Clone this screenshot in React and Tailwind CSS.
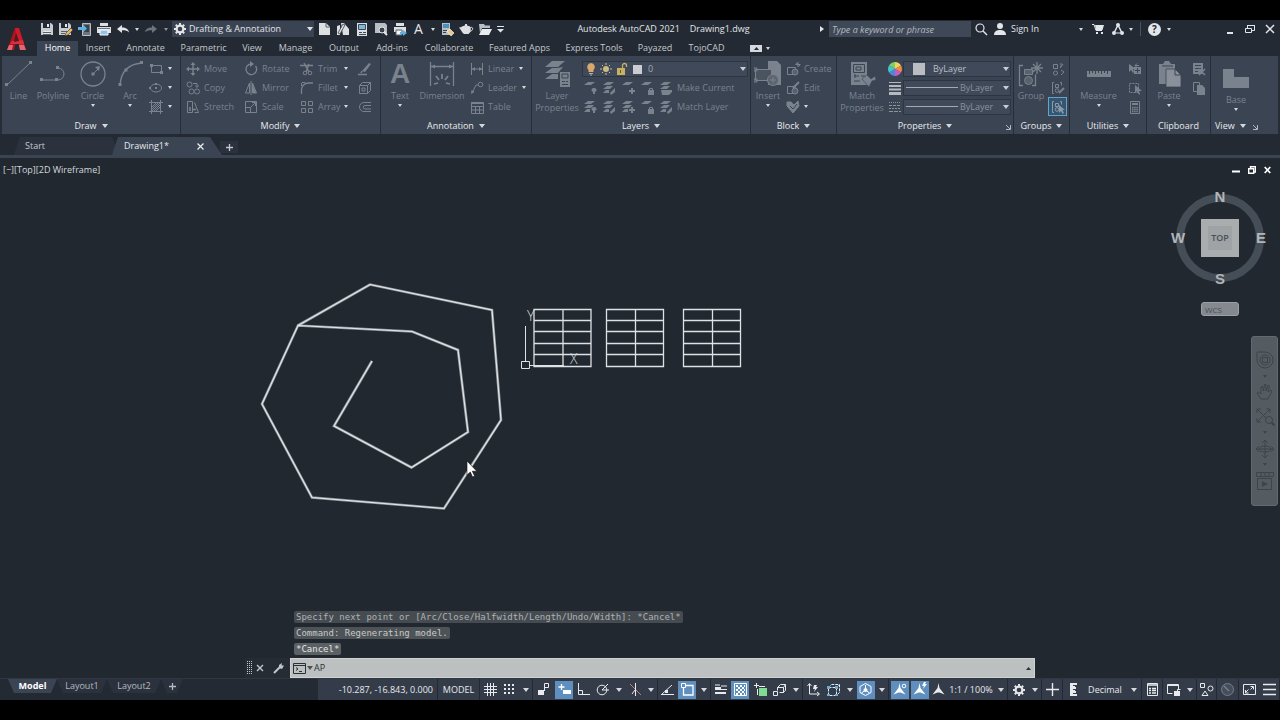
import React, { useState } from "react";

/* ---------- small helpers ---------- */

function Ico({ w = 16, h = 16, className = "", children }) {
  return (
    <svg
      width={w}
      height={h}
      viewBox={`0 0 ${w} ${h}`}
      fill="none"
      stroke="currentColor"
      strokeWidth="1"
      className={`shrink-0 ${className}`}
      aria-hidden="true"
    >
      {children}
    </svg>
  );
}

function Caret({ className = "text-[#d5d8dd]" }) {
  return (
    <Ico w={6} h={4} className={className}>
      <path d="M0 0h6L3 4z" fill="currentColor" stroke="none" />
    </Ico>
  );
}

function SmallCaret({ className = "text-[#d5d8dd]" }) {
  return (
    <Ico w={4} h={3} className={className}>
      <path d="M0 0h4L2 3z" fill="currentColor" stroke="none" />
    </Ico>
  );
}

/* ---------- quick access icons ---------- */

const Save = () => (
  <Ico>
    <path d="M2 2h10l2 2v10H2z" fill="#c8ccd0" stroke="none" />
    <path d="M4 2h7v5H4z" fill="#232a33" stroke="none" />
    <path d="M8 3h2v3H8zM4.500 10h7v4h-7z" fill="#e8eaec" stroke="none" />
    <path d="M4 11.500h8M4 13.500h8" stroke="#5a616b" />
  </Ico>
);
const SaveAs = () => (
  <Ico>
    <path d="M1 2h10l2 2v10H1z" fill="#c8ccd0" stroke="none" />
    <path d="M3 2h7v5H3z" fill="#232a33" stroke="none" />
    <path d="M7 3h2v3H7z" fill="#e8eaec" stroke="none" />
    <path d="M3 10.500h6M3 12.500h4" stroke="#5a616b" />
    <path d="M7 15l1-3 5-5 2 2-5 5z" fill="#e9b565" stroke="#232a33" strokeWidth=".6" />
  </Ico>
);
const OpenMobile = () => (
  <Ico>
    <path d="M5.500 2.500h8v12h-8z" fill="#6d747d" stroke="#b9bec4" />
    <path d="M7 4h5v7H7z" fill="#39414b" stroke="none" />
    <path d="M1 6h5V3.500L10 7.500 6 11.500V9H1z" fill="#5fb0e0" stroke="none" />
  </Ico>
);
const Printer = () => (
  <Ico>
    <path d="M4 2h8v3H4zM1 6h14v6H1z" fill="#dde0e3" stroke="none" />
    <path d="M4 9h8v5H4z" fill="#8fc4e8" stroke="#fff" />
    <path d="M2 7.500h12" stroke="#6d747d" />
  </Ico>
);
const Undo = ({ flip }) => (
  <Ico className={flip ? "-scale-x-100 text-[#6d747e]" : "text-[#e3e5e8]"}>
    <path d="M2 8l5-4v2.500c4 0 6.500 1.500 7 5-2-2-4-2.300-7-2.200V12z" fill="currentColor" stroke="none" />
  </Ico>
);
const Gear = ({ className = "text-[#e3e5e8]" }) => (
  <Ico w={14} h={14} className={className}>
    <circle cx="7" cy="7" r="3.400" strokeWidth="2.200" />
    <path
      d="M7 1v2M7 11v2M1 7h2M11 7h2M2.800 2.800l1.400 1.400M9.800 9.800l1.400 1.400M2.800 11.200l1.400-1.400M9.800 4.200l1.400-1.400"
      strokeWidth="2"
    />
  </Ico>
);
const NewPage = () => (
  <Ico>
    <path d="M3 2h7l4 4v8H3z" fill="#dde0e3" stroke="none" />
    <path d="M10 2v4h4" stroke="#5a616b" />
  </Ico>
);
const Sheets = () => (
  <Ico>
    <path d="M2 5l3-1v10H2zM6 2h3l5 6v6H8z" fill="#dde0e3" stroke="none" />
    <path d="M3 12l5-9 2 1-5 9z" fill="#dde0e3" stroke="#39414b" strokeWidth=".8" />
  </Ico>
);
const PageSetup = () => (
  <Ico>
    <path d="M3 2h10v13H3z" fill="#dde0e3" stroke="none" />
    <path d="M4.500 3.500h7v5h-7z" fill="#7db7dd" stroke="#3f4853" />
    <path d="M5 11.500h3M9 11.500h3M5 13.500h7" stroke="#3f4853" />
  </Ico>
);
const Preview = () => (
  <Ico>
    <path d="M2 2h10l2 2v8H2z" fill="#b9bec4" stroke="none" />
    <circle cx="9" cy="9" r="3" fill="#39414b" stroke="#e3e5e8" />
    <path d="M11 11l3 3" stroke="#e3e5e8" strokeWidth="2" />
  </Ico>
);
const BatchPlot = () => (
  <Ico>
    <path d="M4 2h8v3H4zM2 6h12v5H2z" fill="#dde0e3" stroke="none" />
    <path d="M4 9h6v5H4z" fill="#f4f5f6" stroke="#5a616b" />
    <path d="M8 11h3V9l4 3-4 3v-2H8z" fill="#5fb0e0" stroke="none" />
  </Ico>
);
const Brush = () => (
  <Ico>
    <path d="M3 2h8v12H3z" fill="#b9bec4" stroke="none" />
    <path d="M4 3h6v4H4z" fill="#4a8fc0" stroke="none" />
    <path d="M4 9.500h4M4 11.500h3" stroke="#39414b" />
    <path d="M8 10l3-2 4 4-3 3z" fill="#e9c98a" stroke="#fff" strokeWidth=".6" />
  </Ico>
);
const Teapot = () => (
  <Ico>
    <path d="M3.500 6c2-2 7-2 9 0 1 3-.5 6-2 7H6C3.800 11.500 3 8.500 1 6.500z" fill="#dde0e3" stroke="none" />
    <path d="M12.500 6.500c3-1 3 3-.5 4" stroke="#dde0e3" />
    <path d="M7 4h2" stroke="#dde0e3" strokeWidth="2" />
  </Ico>
);
const Folder = () => (
  <Ico>
    <path d="M2 3h5l1 1.500h5V7H5l-2 5z" fill="#b9bec4" stroke="none" />
    <path d="M5 8h10l-3 6H2z" fill="#e9ebed" stroke="none" />
  </Ico>
);

/* ---------- ribbon icons ---------- */

const LineBig = () => (
  <Ico w={28} h={28}>
    <path d="M2 25L25 3" />
    <path d="M0 23h3v3H0zM24 1h3v3h-3z" fill="currentColor" stroke="none" />
  </Ico>
);
const PolylineBig = () => (
  <Ico w={28} h={28}>
    <path d="M2 20h17a6 6 0 0 0 0-12" />
    <path d="M1 18h3v3H1zM16 18h3v3h-3zM17 6h3v3h-3z" fill="currentColor" stroke="none" />
  </Ico>
);
const CircleBig = () => (
  <Ico w={28} h={28}>
    <circle cx="14" cy="14" r="12" strokeWidth="1.300" />
    <path d="M14 14l6-6" />
    <path d="M12.500 12.500h3v3h-3zM21 6l-1 5-4-4z" fill="currentColor" stroke="none" />
  </Ico>
);
const ArcBig = () => (
  <Ico w={28} h={28}>
    <path d="M4 25C5 12 12 4 26 3" strokeWidth="1.300" />
    <path d="M2.500 23h3v3h-3zM8.500 8.500h3v3h-3zM24 1h3v3h-3z" fill="currentColor" stroke="none" />
  </Ico>
);
const RectIco = () => (
  <Ico>
    <path d="M3.500 4.500h10v7h-10z" />
    <path d="M2 3h3v3H2zM12 10h3v3h-3z" fill="currentColor" stroke="none" />
  </Ico>
);
const EllipseIco = () => (
  <Ico>
    <ellipse cx="8" cy="8" rx="5.500" ry="4" />
    <path d="M7 7h2v2H7zM1 7h2v2H1zM7 3h2v2H7z" fill="currentColor" stroke="none" />
  </Ico>
);
const HatchIco = () => (
  <Ico>
    <path d="M3.500 1v14M12.500 1v14M1 3.500h14M1 12.500h14" />
    <path d="M4 8l4-4M4 12l8-8M8 12l4-4M4 10l6-6M6 12l6-6" />
  </Ico>
);
const MoveIco = () => (
  <Ico>
    <path d="M8 3v10M3 8h10" strokeWidth="1.400" />
    <path d="M8 1l2.500 3h-5zM8 15l2.500-3h-5zM1 8l3-2.500v5zM15 8l-3-2.500v5z" fill="currentColor" stroke="none" />
  </Ico>
);
const CopyIco = () => (
  <Ico>
    <circle cx="4.500" cy="4.500" r="2.500" />
    <circle cx="6.500" cy="11.500" r="2.500" />
    <circle cx="12" cy="11.500" r="2.500" />
    <path d="M8 3.500h4v3M10.500 5.500l1.500 2 1.500-2" />
  </Ico>
);
const StretchIco = () => (
  <Ico>
    <path d="M2.500 2.500h5v11h-5zM9.500 3.500l4 10h-4" />
    <path d="M5 8v4M8 10.500h3" strokeWidth="1.500" />
  </Ico>
);
const RotateIco = () => (
  <Ico>
    <path d="M12.500 5A5.300 5.300 0 1 1 8 3" strokeWidth="1.300" />
    <path d="M7 0l4 3-4 3z" fill="currentColor" stroke="none" />
  </Ico>
);
const MirrorIco = () => (
  <Ico>
    <path d="M6.500 3v10h-4zM9.500 3v10h4z" />
    <path d="M8 1v14" />
    <path d="M10 5l3 8h-3z" fill="currentColor" stroke="none" />
  </Ico>
);
const ScaleIco = () => (
  <Ico>
    <path d="M2.500 2.500h11v11h-11zM2.500 8.500h5v5" />
    <path d="M8 8l4-4M9 3.500h3.500V7" />
  </Ico>
);
const TrimIco = () => (
  <Ico>
    <path d="M1 4.500h13M5 2l5 9M10 3l-3 8" strokeWidth="1.400" />
    <circle cx="11" cy="12" r="1.800" />
    <circle cx="6" cy="12" r="1.800" />
  </Ico>
);
const FilletIco = () => (
  <Ico>
    <path d="M2.500 14V10c0-4 3-7 7-7H14" strokeWidth="1.300" />
    <path d="M2.500 3v3M3 2.500h3" />
  </Ico>
);
const ArrayIco = () => (
  <Ico>
    <path d="M2.500 2.500h4v4h-4zM9.500 2.500h4v4h-4zM2.500 9.500h4v4h-4zM9.500 9.500h4v4h-4z" />
  </Ico>
);
const EraseIco = () => (
  <Ico>
    <path d="M5 10L12 2l2 1-6 8z" fill="currentColor" stroke="none" />
    <path d="M1 13.500h9M4 12l1-2" strokeWidth="1.500" />
  </Ico>
);
const ExplodeIco = () => (
  <Ico>
    <path d="M2.500 5.500h8v8h-8zM2.500 5.500l3-3h8v8l-3 3M10.500 5.500l3-3M5 8h3v3H5z" />
  </Ico>
);
const OffsetIco = () => (
  <Ico>
    <path d="M14 3.500H7a4.500 4.500 0 0 0 0 9h7M14 6.500H8a1.700 1.700 0 0 0 0 3.500h6" />
  </Ico>
);
const DimensionBig = () => (
  <Ico w={28} h={28}>
    <path d="M2.500 2v24M25.500 2v24M3 6.500h22" strokeWidth="1.300" />
    <path d="M3 6.500l4-2v4zM25 6.500l-4-2v4z" fill="currentColor" stroke="none" />
    <path d="M14 14v5M8 16l3 4M20 16l-3 4M6 24l4-1M22 24l-4-1" strokeWidth="1.800" />
  </Ico>
);
const LinearIco = () => (
  <Ico>
    <path d="M2.500 2v12M13.500 2v12M3 8h10" />
    <path d="M3 8l3-2v4zM13 8l-3-2v4z" fill="currentColor" stroke="none" />
  </Ico>
);
const LeaderIco = () => (
  <Ico>
    <circle cx="11.500" cy="4.500" r="2.300" />
    <path d="M9 5H7l-4 8" />
    <path d="M2 14l.5-4 3 2z" fill="currentColor" stroke="none" />
  </Ico>
);
const TableIco = () => (
  <Ico>
    <path d="M2.500 3.500h12v11h-12zM2 7.500h12M2 11h12M6.500 7v7M10.500 7v7" />
    <path d="M2 3h12v2H2z" fill="currentColor" stroke="none" />
  </Ico>
);
const LayersBig = () => (
  <Ico w={28} h={28}>
    <g fill="currentColor" stroke="none">
      <path d="M9 1h13l-7 6H2zM9 8h5l6-1-5 6H2zM9 14h6v5H2z" />
      <path d="M17 12h10v15H17z" />
    </g>
    <path d="M19 14h6v4h-6zM19 21.500h3M23 21.500h2M19 24.500h6" stroke="#3b4453" />
  </Ico>
);
const LayerMini = ({ mark, full }) => (
  <Ico>
    <g fill="currentColor" stroke="none">
      <path d="M6 2h7l-4 3H2z" />
      {full && <path d="M6 6h6l-3 3H2z" />}
      {full && mark !== "hand" && <path d="M5 10h3v3H2z" />}
      {mark === "dot" && <path d="M12 8a2 2 0 0 1 1 4v2h-2v-2a2 2 0 0 1 1-4z" />}
      {mark === "arrow" && <path d="M14 8v4l-4 3-1-2z" />}
      {mark === "star" && <path d="M11 8h2v2h2v2h-2v2h-2v-2H9v-2h2z" />}
      {mark === "lock" && <path d="M9 10h6v5H9z" />}
      {mark === "hand" && <path d="M3 10h11v2l-3 3H4z" />}
    </g>
    {mark === "lock" && <path d="M10.500 10V8.500h3V10" />}
  </Ico>
);
const InsertBig = () => (
  <Ico w={28} h={28}>
    <path d="M14 1h9l4 4v20H14z" fill="currentColor" stroke="none" />
    <path d="M1.500 9.500h16v11h-16z" fill="#4b535f" />
    <circle cx="19" cy="20" r="5.500" fill="#5c6470" />
    <path d="M19 17v6M16 20h6M0 8h3v3H0zM0 19h3v3H0z" />
  </Ico>
);
const BlockIco = ({ kind }) => (
  <Ico>
    {kind !== "attr" && <path d="M2.500 6.500h8v7h-8z" />}
    {kind !== "attr" && <circle cx="10" cy="11" r="3" fill="#59616d" />}
    {kind === "create" && <path d="M13 1v5M10.500 3.500h5M11 2l4 3" />}
    {kind === "edit" && <path d="M8 8l6-6" strokeWidth="2" />}
    {kind === "attr" && <path d="M2 3h4l3 3 4-4 1 5-6 7-6-7z" fill="currentColor" />}
    {kind === "attr" && <path d="M5 7l3 3 4-5" stroke="#3b4453" />}
  </Ico>
);
const MatchBig = () => (
  <Ico w={28} h={28}>
    <path d="M3 2h16v23H3z" fill="currentColor" stroke="none" />
    <path d="M5.500 4.500h11v8h-11zM8 7h5v3H8zM6 16h5M7 14v4M13 16h4M6 21h6" stroke="#3b4453" />
    <path d="M14 19l5-4 4 4 4-3 1 4-4 1-3 6z" fill="currentColor" stroke="#3b4453" strokeWidth=".6" />
  </Ico>
);
const ColorWheel = () => (
  <Ico>
    <g stroke="none">
      <path d="M8 8V1a7 7 0 0 1 6 3.500z" fill="#f0d55c" />
      <path d="M8 8l6-3.500a7 7 0 0 1 0 7z" fill="#ef8a4b" />
      <path d="M8 8l6 3.500A7 7 0 0 1 8 15z" fill="#c95bc0" />
      <path d="M8 8v7a7 7 0 0 1-6-3.500z" fill="#4e86dd" />
      <path d="M8 8l-6 3.500a7 7 0 0 1 0-7z" fill="#46c3cc" />
      <path d="M8 8L2 4.500A7 7 0 0 1 8 1z" fill="#79cf6d" />
    </g>
  </Ico>
);
const LineweightIco = () => (
  <Ico className="text-[#b4b9c0]">
    <path d="M2 2.500h12" />
    <path d="M2 6h12" strokeWidth="2" />
    <path d="M2 9.500h12" strokeWidth="2" />
    <path d="M2 13.500h12" strokeWidth="3" />
  </Ico>
);
const LinetypeIco = () => (
  <Ico className="text-[#8d949d]">
    <path d="M2 3.500h12" strokeDasharray="1 1" />
    <path d="M2 6.500h12" strokeDasharray="3 1" />
    <path d="M2 9.500h12" strokeDasharray="2 1" />
    <path d="M2 12.500h12" strokeDasharray="4 1" />
  </Ico>
);
const GroupBig = () => (
  <Ico w={28} h={28}>
    <path d="M6 5.500H2.500v20H6M15 25.500h3.500v-11" strokeWidth="1.300" />
    <path d="M7.500 9.500h8v5h-8z" fill="#59616d" />
    <circle cx="11.500" cy="20.500" r="4" fill="#59616d" />
    <path d="M20 2v12M14 8h12M16 4l8 8M24 4l-8 8" strokeWidth="1.300" />
  </Ico>
);
const UngroupIco = () => (
  <Ico>
    <path d="M3.500 3.500h4v4h-4zM11 2v4M13 3l-3 4M11 9l3 2-3 3" />
    <circle cx="5.500" cy="12" r="2" />
  </Ico>
);
const GroupEditIco = ({ cursor }) => (
  <Ico>
    <path d="M4 2.500H2.500v11H4M10 2.500h1.500v3M5.500 4.500h3v3h-3z" />
    <circle cx="7" cy="10.500" r="1.800" />
    {cursor ? (
      <path d="M9 6v8l2-2 1.500 3 1.500-1-1.500-3H15z" fill="currentColor" stroke="none" />
    ) : (
      <path d="M9 13l5-5" strokeWidth="2" />
    )}
  </Ico>
);
const MeasureBig = () => (
  <Ico w={28} h={28}>
    <path d="M2 11h24v6H2z" fill="currentColor" stroke="none" />
    <path d="M4.500 11v3M7.500 11v2M10.500 11v3M13.500 11v2M16.500 11v3M19.500 11v2M22.500 11v3" stroke="#3b4453" />
  </Ico>
);
const SelectIco = ({ dashed }) => (
  <Ico>
    {dashed ? (
      <path d="M2.500 3.500h9v9h-9z" strokeDasharray="2 1" />
    ) : (
      <path d="M7 6h7v7H7z" fill="currentColor" stroke="none" />
    )}
    <path
      d={dashed ? "M8 5v8l2-2 2 4 1-1-1-3h3z" : "M2 3v8l2-2 2 3 1-1-1-3h3z"}
      fill="currentColor"
      stroke="none"
    />
    {!dashed && <path d="M8 9.500h5M10.500 7v5" stroke="#3b4453" />}
    {!dashed && <path d="M8 4.500h4M10 2.500l-2 2 2 2" />}
  </Ico>
);
const CalcIco = () => (
  <Ico>
    <path d="M3.500 2.500h9v12h-9z" />
    <path d="M5 5h6" strokeWidth="2" />
    <path d="M5 8.500h6M5 10.500h6M5 12.500h6" strokeWidth="1.300" strokeDasharray="1.500 .7" />
  </Ico>
);
const PasteBig = () => (
  <Ico w={28} h={28}>
    <path d="M4 4h4l2-3h4l2 3h4v20H4z" fill="currentColor" stroke="none" />
    <path d="M7 6h11" stroke="#3b4453" />
    <path d="M11 9h9l6 6v12H11z" fill="#8a9099" stroke="#3b4453" strokeWidth=".8" />
    <path d="M20 9v6h6" stroke="#3b4453" />
  </Ico>
);
const CutIco = () => (
  <Ico>
    <path d="M2 2h10v11H2z" fill="currentColor" stroke="none" />
    <path d="M4 4.500h6M4 7.500h6M4 10.500h3" stroke="#3b4453" />
    <path d="M8 8l6 6M14 8l-6 6" strokeWidth="1.500" />
  </Ico>
);
const CopyClipIco = () => (
  <Ico>
    <path d="M2.500 2.500h6v9h-6z" />
    <path d="M6 5h5l3 3v7H6z" fill="currentColor" stroke="none" />
  </Ico>
);
const BaseBig = () => (
  <Ico w={28} h={28}>
    <path d="M1 5h11v8h15v11H1z" fill="currentColor" stroke="none" />
  </Ico>
);

/* ---------- ribbon building blocks ---------- */

function Panel({ title, width, menu = true, launcher, align = "justify-center", children }) {
  return (
    <section
      className={`${width} h-[78px] shrink-0 flex flex-col bg-[#3b4453] border-r border-[#262d37] text-[#7a828d]`}
    >
      <div className="flex-1 flex pt-[3px]">{children}</div>
      <div className={`h-[18px] pt-[2px] flex items-center relative ${align}`}>
        <button className="flex items-center gap-[5px] text-[9px] leading-4 font-medium text-[#e8eaed]">
          {title}
          {menu && <Caret />}
        </button>
        {launcher && (
          <button aria-label={`${title} settings`} className={launcher}>
            <Ico w={6} h={6} className="text-[#b4b9c0]">
              <path d="M1 1l4 4M5.500 1v4.500H1" />
            </Ico>
          </button>
        )}
      </div>
    </section>
  );
}

function BigButton({ icon, label, width, menu, drop = "" }) {
  return (
    <button className={`${width} shrink-0 flex flex-col items-center ${drop}`}>
      <span className="h-[31px] pb-px flex items-center">{icon}</span>
      <span className="text-[9px] leading-3 text-center">{label}</span>
      {menu && (
        <span className="pt-[2px]">
          <SmallCaret />
        </span>
      )}
    </button>
  );
}

function SmallButton({ icon, label, menu, name, className = "" }) {
  return (
    <button aria-label={label || name} className={`h-[19px] flex items-center gap-[3px] ${className}`}>
      {icon}
      {label && <span className="text-[9px] leading-4 whitespace-nowrap">{label}</span>}
      {menu && <SmallCaret />}
    </button>
  );
}

function RibbonSelect({ label, options, className = "", children }) {
  return (
    <div className="h-4 flex-1 min-w-0 flex items-center bg-[#3f4959] border border-[#2d3541]">
      {children}
      <select
        aria-label={label}
        className={`flex-1 min-w-0 h-full appearance-none bg-transparent text-[9px] leading-[14px] outline-none ${className}`}
      >
        {options.map((o) => (
          <option key={o}>{o}</option>
        ))}
      </select>
      <Caret className="mr-[1px] text-[#c9cdd3]" />
    </div>
  );
}

/* ---------- header ---------- */

const menuTabs = [
  { name: "Insert", width: "w-[40px]" },
  { name: "Annotate", width: "w-[55px]" },
  { name: "Parametric", width: "w-[61px]" },
  { name: "View", width: "w-[36px]" },
  { name: "Manage", width: "w-[51px]" },
  { name: "Output", width: "w-[46px]" },
  { name: "Add-ins", width: "w-[50px]" },
  { name: "Collaborate", width: "w-[64px]" },
  { name: "Featured Apps", width: "w-[77px]" },
  { name: "Express Tools", width: "w-[72px]" },
  { name: "Payazed", width: "w-[50px]" },
  { name: "TojoCAD", width: "w-[53px]" },
];

function QuickButton({ name, width = "w-[19px]", children }) {
  return (
    <button aria-label={name} className={`${width} h-full shrink-0 flex items-center justify-center`}>
      {children}
    </button>
  );
}

function TitleBar() {
  return (
    <div className="h-[18px] flex items-center text-[9px] text-[#e2e5e9]">
      <QuickButton name="Save"><Save /></QuickButton>
      <QuickButton name="Save As"><SaveAs /></QuickButton>
      <QuickButton name="Open from Web & Mobile"><OpenMobile /></QuickButton>
      <QuickButton name="Plot"><Printer /></QuickButton>
      <QuickButton name="Undo"><Undo /></QuickButton>
      <QuickButton name="Undo list" width="w-[9px]"><SmallCaret /></QuickButton>
      <QuickButton name="Redo"><Undo flip /></QuickButton>
      <QuickButton name="Redo list" width="w-[12px]"><SmallCaret className="text-[#8b929b]" /></QuickButton>
      <div className="w-[142px] h-4 shrink-0 flex items-center bg-[#3a4352] pl-[1px]">
        <Gear />
        <select
          aria-label="Workspace"
          className="flex-1 min-w-0 h-4 appearance-none bg-transparent outline-none pl-[2px] text-[9px] leading-4"
        >
          <option>Drafting &amp; Annotation</option>
        </select>
        <Caret className="mr-[1px] text-[#dfe2e6]" />
      </div>
      <QuickButton name="New"><NewPage /></QuickButton>
      <QuickButton name="Sheet Set"><Sheets /></QuickButton>
      <QuickButton name="Page Setup"><PageSetup /></QuickButton>
      <QuickButton name="Preview"><Preview /></QuickButton>
      <QuickButton name="Batch Plot"><BatchPlot /></QuickButton>
      <button className="w-[19px] text-center text-[14px] leading-4">A</button>
      <QuickButton name="Text list" width="w-[9px]"><SmallCaret /></QuickButton>
      <QuickButton name="Match"><Brush /></QuickButton>
      <QuickButton name="Render"><Teapot /></QuickButton>
      <QuickButton name="Open"><Folder /></QuickButton>
      <QuickButton name="Customize" width="w-[13px]">
        <Ico w={7} h={7}>
          <path d="M0 .5h7" />
          <path d="M0 3h7L3.500 6.500z" fill="currentColor" stroke="none" />
        </Ico>
      </QuickButton>
      <h1 className="flex-1 flex justify-center gap-[10px] whitespace-nowrap">
        <span>Autodesk AutoCAD 2021</span>
        <span>Drawing1.dwg</span>
      </h1>
      <button aria-label="Collapse search" className="w-[9px]">
        <Ico w={4} h={6}>
          <path d="M0 0l4 3-4 3z" fill="currentColor" stroke="none" />
        </Ico>
      </button>
      <input
        type="search"
        aria-label="Search"
        placeholder="Type a keyword or phrase"
        className="w-[142px] h-4 bg-[#3f4857] px-[3px] text-[9px] italic outline-none placeholder:text-[#b4b9c0]"
      />
      <QuickButton name="Find" width="w-[20px]">
        <Ico w={14} h={14}>
          <circle cx="6" cy="6" r="4" strokeWidth="1.200" />
          <path d="M9 9l4 4" strokeWidth="1.500" />
        </Ico>
      </QuickButton>
      <button className="w-[85px] flex items-center gap-1">
        <Ico w={14} h={14} className="ml-[2px]">
          <circle cx="7" cy="4" r="3" fill="currentColor" stroke="none" />
          <path d="M1 13c0-4 3-5 6-5s6 1 6 5z" fill="currentColor" stroke="none" />
        </Ico>
        Sign In
      </button>
      <QuickButton name="Account list" width="w-[10px]"><SmallCaret /></QuickButton>
      <QuickButton name="App Store" width="w-[24px]">
        <Ico w={12} h={12}>
          <path d="M0 1.500h2l2 6h6" />
          <path d="M3 2h9l-1.500 5H4zM4 9h2v2H4zM9 9h2v2H9z" fill="currentColor" stroke="none" />
        </Ico>
      </QuickButton>
      <QuickButton name="Autodesk" width="w-[15px]">
        <Ico w={14} h={14}>
          <path d="M7 3L3 11M7 3l4 8" strokeWidth="1.500" />
          <path d="M5 11h4" />
          <circle cx="7" cy="3" r="2" fill="currentColor" stroke="none" />
          <circle cx="3" cy="11" r="2" fill="currentColor" stroke="none" />
          <circle cx="11" cy="11" r="2" fill="currentColor" stroke="none" />
        </Ico>
      </QuickButton>
      <QuickButton name="Autodesk list" width="w-[11px]"><SmallCaret /></QuickButton>
      <span className="w-px h-[14px] ml-1 bg-[#4b535f]" />
      <button
        aria-label="Help"
        className="ml-[7px] w-[13px] h-[13px] rounded-full bg-[#e2e5e9] text-[10px] leading-[13px] font-bold text-[#232a33]"
      >
        ?
      </button>
      <QuickButton name="Help list" width="w-[16px]"><SmallCaret /></QuickButton>
      <div className="ml-[43px] flex items-center">
        <QuickButton name="Minimize" width="w-[20px]">
          <Ico w={6} h={12}><path d="M0 10h6" strokeWidth="2" /></Ico>
        </QuickButton>
        <QuickButton name="Restore" width="w-[20px]">
          <Ico w={10} h={10}>
            <path d="M.5 4.500h6v4h-6zM2.500 4V1.500h7v5H7M2 1.500h8" />
          </Ico>
        </QuickButton>
        <QuickButton name="Close" width="w-[20px]">
          <Ico w={10} h={10}><path d="M1 1l8 8M9 1L1 9" strokeWidth="1.500" /></Ico>
        </QuickButton>
      </div>
    </div>
  );
}

function Header() {
  return (
    <header className="h-9 flex bg-[#232a33]">
      <button aria-label="Application menu" className="w-[37px] shrink-0 flex items-center pl-[7px]">
        <Ico w={20} h={26}>
          <g stroke="none">
            <path d="M0 25L8 3h4l-5 22z" fill="#b3121d" />
            <path d="M8 3h4l7 22h-6z" fill="#cf1b29" />
            <path d="M5 16l11-1 1 4H3z" fill="#d8303c" />
            <path d="M9 8l3 8-5 1z" fill="#4a1c24" />
            <path d="M0 25l2-5h4l-1 5zM13 25l-1-5h5l2 5z" fill="#dd6a72" />
          </g>
        </Ico>
      </button>
      <div className="flex-1 min-w-0 flex flex-col">
        <TitleBar />
        <nav className="flex-1 flex items-end text-[9px] leading-[14px] text-[#c3c8ce]">
          <button className="w-[41px] h-[15px] pb-px bg-[#3b4453] text-white font-medium">Home</button>
          {menuTabs.map((t) => (
            <button key={t.name} className={`${t.width} h-[15px] pb-px shrink-0 whitespace-nowrap`}>
              {t.name}
            </button>
          ))}
          <button aria-label="Minimize ribbon" className="h-[15px] flex items-center gap-1 pl-[17px]">
            <Ico w={12} h={7}>
              <path d="M0 0h12v7H0z" fill="#d5d8dc" stroke="none" />
              <path d="M4 5h5L6.500 2z" fill="#232a33" stroke="none" />
            </Ico>
            <SmallCaret />
          </button>
        </nav>
      </div>
    </header>
  );
}

function Ribbon() {
  return (
    <div className="flex pl-[2px] pr-[1px] bg-[#262d37]">
      <Panel title="Draw" width="w-[179px]">
        <BigButton icon={<LineBig />} label="Line" width="w-[33px]" />
        <BigButton icon={<PolylineBig />} label="Polyline" width="w-[36px]" />
        <BigButton icon={<CircleBig />} label="Circle" width="w-[43px]" menu />
        <BigButton icon={<ArcBig />} label="Arc" width="w-[32px]" menu />
        <div>
          <SmallButton icon={<RectIco />} name="Rectangle" menu className="gap-[4px] pl-[2px]" />
          <SmallButton icon={<EllipseIco />} name="Ellipse" menu className="gap-[4px] pl-[2px]" />
          <SmallButton icon={<HatchIco />} name="Hatch" menu className="gap-[4px] pl-[2px]" />
        </div>
      </Panel>

      <Panel title="Modify" width="w-[200px]">
        <div className="w-[62px] pl-1">
          <SmallButton icon={<MoveIco />} label="Move" />
          <SmallButton icon={<CopyIco />} label="Copy" />
          <SmallButton icon={<StretchIco />} label="Stretch" />
        </div>
        <div className="w-[56px]">
          <SmallButton icon={<RotateIco />} label="Rotate" className="gap-[2px]" />
          <SmallButton icon={<MirrorIco />} label="Mirror" className="gap-[2px]" />
          <SmallButton icon={<ScaleIco />} label="Scale" className="gap-[2px]" />
        </div>
        <div className="w-[49px] flex flex-col [&>button]:w-full [&>button>svg:last-child]:ml-auto">
          <SmallButton icon={<TrimIco />} label="Trim" menu className="gap-[1px]" />
          <SmallButton icon={<FilletIco />} label="Fillet" menu className="gap-[1px]" />
          <SmallButton icon={<ArrayIco />} label="Array" menu className="gap-[1px]" />
        </div>
        <div className="pl-[9px]">
          <SmallButton icon={<EraseIco />} name="Erase" />
          <SmallButton icon={<ExplodeIco />} name="Explode" />
          <SmallButton icon={<OffsetIco />} name="Offset" />
        </div>
      </Panel>

      <Panel title="Annotation" width="w-[151px]">
        <BigButton
          icon={<span className="font-['Liberation_Sans',sans-serif] text-[28px] leading-[30px] font-bold">A</span>}
          label="Text"
          width="w-[38px]"
          menu
        />
        <BigButton icon={<DimensionBig />} label="Dimension" width="w-[46px]" />
        <div className="pl-1">
          <SmallButton icon={<LinearIco />} label="Linear" menu className="[&>span]:mr-[2px]" />
          <SmallButton icon={<LeaderIco />} label="Leader" menu className="[&>span]:mr-[2px]" />
          <SmallButton icon={<TableIco />} label="Table" />
        </div>
      </Panel>

      <Panel title="Layers" width="w-[219px]">
        <BigButton icon={<LayersBig />} label="Layer Properties" width="w-[50px]" />
        <div className="flex-1 min-w-0 pr-[2px]">
          <div className="h-[19px] flex items-center">
            <RibbonSelect label="Layer" options={["0"]} className="pl-[2px] text-[#a3a9b1]">
              <Ico w={62} h={14} className="ml-[1px]">
                <path d="M7 1a4 4 0 0 1 2.500 7v2h-5V8A4 4 0 0 1 7 1z" fill="#d9a86c" stroke="none" />
                <path d="M5 11.500h4M6 13h2" stroke="#a9aeb5" />
                <circle cx="22" cy="7" r="3" fill="#c9bd83" stroke="none" />
                <path
                  d="M22 1v2M22 11v2M16 7h2M26 7h2M18 3l1 1M25 10l1 1M26 3l-1 1M19 10l-1 1"
                  stroke="#c9bd83"
                />
                <path d="M33 6h8v7h-8z" fill="#c9b061" stroke="none" />
                <path d="M38.500 6V3.500a2 2 0 0 1 4 0V5" stroke="#c9b061" strokeWidth="1.300" />
                <path d="M36.500 8v3" stroke="#5c5a3a" />
                <path d="M49 3h9v9h-9z" fill="#c9ccd0" stroke="none" />
              </Ico>
            </RibbonSelect>
          </div>
          <div className="h-[19px] flex items-center gap-[3px]">
            <button aria-label="Layer off"><LayerMini mark="dot" /></button>
            <button aria-label="Isolate"><LayerMini mark="arrow" full /></button>
            <button aria-label="Freeze"><LayerMini mark="star" /></button>
            <button aria-label="Lock"><LayerMini mark="lock" /></button>
            <SmallButton icon={<LayerMini mark="hand" full />} label="Make Current" />
          </div>
          <div className="h-[19px] flex items-center gap-[3px]">
            <button aria-label="Turn all on"><LayerMini mark="dot" full /></button>
            <button aria-label="Unisolate"><LayerMini mark="arrow" full /></button>
            <button aria-label="Thaw all"><LayerMini mark="star" full /></button>
            <button aria-label="Unlock"><LayerMini mark="lock" /></button>
            <SmallButton icon={<LayerMini mark="arrow" full />} label="Match Layer" />
          </div>
        </div>
      </Panel>

      <Panel title="Block" width="w-[86px]">
        <BigButton icon={<InsertBig />} label="Insert" width="w-[34px]" menu />
        <div>
          <SmallButton icon={<BlockIco kind="create" />} label="Create" className="gap-[2px]" />
          <SmallButton icon={<BlockIco kind="edit" />} label="Edit" className="gap-[2px]" />
          <SmallButton icon={<BlockIco kind="attr" />} name="Edit Attributes" menu />
        </div>
      </Panel>

      <Panel title="Properties" width="w-[177px]" launcher="absolute top-[8px] right-[2px]">
        <BigButton icon={<MatchBig />} label="Match Properties" width="w-[50px]" />
        <div className="flex-1 min-w-0 pr-[2px]">
          <div className="h-[19px] flex items-center">
            <ColorWheel />
            <RibbonSelect label="Object color" options={["ByLayer"]} className="pl-2 text-[#b9bec5]">
              <span className="ml-[9px] w-3 h-3 bg-[#b9bcc2]" />
            </RibbonSelect>
          </div>
          <div className="h-[19px] flex items-center">
            <LineweightIco />
            <RibbonSelect label="Lineweight" options={["ByLayer"]} className="pl-[2px] text-[#8a919b]">
              <span className="ml-[2px] w-[52px] h-px bg-[#a4aab2]" />
            </RibbonSelect>
          </div>
          <div className="h-[19px] flex items-center">
            <LinetypeIco />
            <RibbonSelect label="Linetype" options={["ByLayer"]} className="pl-[2px] text-[#8a919b]">
              <span className="ml-[2px] w-[52px] h-px bg-[#a4aab2]" />
            </RibbonSelect>
          </div>
        </div>
      </Panel>

      <Panel title="Groups" width="w-[56px]">
        <BigButton icon={<GroupBig />} label="Group" width="w-[34px]" />
        <div className="flex flex-col items-center">
          <SmallButton icon={<UngroupIco />} name="Ungroup" />
          <SmallButton icon={<GroupEditIco />} name="Group Edit" />
          <SmallButton
            icon={<GroupEditIco cursor />}
            name="Group Selection"
            className="w-[19px] justify-center border border-[#5fa3d0] bg-[#36566f] text-[#8b99a8]"
          />
        </div>
      </Panel>

      <Panel title="Utilities" width="w-[77px]">
        <BigButton icon={<MeasureBig />} label="Measure" width="w-[57px]" menu />
        <div>
          <SmallButton icon={<SelectIco />} name="Quick Select" />
          <SmallButton icon={<SelectIco dashed />} name="Select All" />
          <SmallButton icon={<CalcIco />} name="Calculator" />
        </div>
      </Panel>

      <Panel title="Clipboard" width="w-[64px]" menu={false}>
        <BigButton icon={<PasteBig />} label="Paste" width="w-[44px]" menu />
        <div>
          <SmallButton icon={<CutIco />} name="Cut" />
          <SmallButton icon={<CopyClipIco />} name="Copy Clip" />
        </div>
      </Panel>

      <Panel title="View" width="flex-1" align="pl-1 gap-[6px]" launcher="pt-[2px]">
        <BigButton icon={<BaseBig />} label="Base" width="w-[50px]" menu drop="pt-1" />
      </Panel>
    </div>
  );
}

function FileTabs() {
  return (
    <div className="pt-[3px] bg-[#232a33]">
      <div className="h-[18px] flex text-[9px] leading-[18px]">
        <button className="ml-[14px] w-[106px] pl-[11px] text-left bg-[#2b323d] text-[#c3c8ce] [clip-path:polygon(0_100%,6px_0,98px_0,100%_100%)]">
          Start
        </button>
        <div className="-ml-[8px] w-[110px] flex items-center bg-[#3b4453] text-[#e8eaed] [clip-path:polygon(0_100%,6px_0,98px_0,100%_100%)]">
          <button className="pl-3 flex-1 text-left">Drawing1*</button>
          <button aria-label="Close Drawing1" className="mr-[18px]">
            <Ico w={7} h={7}><path d="M.5.5l6 6M6.500.5l-6 6" strokeWidth="1.300" /></Ico>
          </button>
        </div>
        <button
          aria-label="New tab"
          className="-ml-[2px] mt-[4px] w-[18px] h-[12px] flex items-center justify-center bg-[#2b323d] text-[#c3c8ce]"
        >
          <Ico w={7} h={7}><path d="M3.500 0v7M0 3.500h7" strokeWidth="1.300" /></Ico>
        </button>
      </div>
      <div className="h-[3px] bg-[#3b4453]" />
    </div>
  );
}

/* ---------- drawing area ---------- */

function GridBlock({ x }) {
  return (
    <g>
      <path d={`M${x} 151.500h57v57h-57zM${x + 29} 151v57`} />
      <path d={`M${x} 162.500h57M${x} 173.500h57M${x} 185.500h57M${x} 196.500h57`} />
    </g>
  );
}

const shape =
  "M298 167.500L370 126.500L492 152L501 262L444 350.500L312 339.500L262 246L298 167.500L412 173.500L458 192L468 274L411.500 309.500L334 268L372 203";

function Drawing() {
  return (
    <svg width="1280" height="520" fill="none" className="absolute top-0 left-0" aria-label="Model space">
      <path d={shape} stroke="#90969c" strokeWidth="2.600" />
      <path d={shape} stroke="#e6e8ea" strokeWidth="1.100" />
      <g stroke="#dfe2e5" strokeWidth="1.300">
        <GridBlock x={534} />
        <GridBlock x={606.5} />
        <GridBlock x={683.5} />
      </g>
      <g stroke="#dfe2e5">
        <path d="M525.500 168v35M529 207.500h35M521.500 203.500h8v7h-8z" />
      </g>
      <g fill="#d5d9dc" fontFamily="'Open Sans', sans-serif" fontWeight="300" fontSize="14">
        <text x="527" y="163">Y</text>
        <text x="570" y="206">X</text>
      </g>
      <path d="M467 303v14l3.300-3 2.300 5 2-1-2.300-4.800h4.500z" fill="#fff" stroke="#111" strokeWidth=".6" />
    </svg>
  );
}

function ViewCube() {
  return (
    <div className="absolute top-[30px] right-[10px] w-[100px] flex flex-col items-center">
      <svg width="100" height="100" viewBox="0 0 100 100" aria-label="View cube">
        <circle cx="50" cy="50" r="40" fill="none" stroke="#454d56" strokeWidth="8" />
        <g fill="#b0b5b9" fontFamily="'Liberation Sans', sans-serif" fontWeight="700" fontSize="15" textAnchor="middle">
          <text x="50" y="14">N</text>
          <text x="50" y="96">S</text>
          <text x="8" y="55">W</text>
          <text x="91" y="55">E</text>
        </g>
        <path d="M31 31h38v38H31z" fill="#a9adae" />
        <path d="M38 38h24v24H38z" fill="#9fa3a5" />
        <text
          x="50"
          y="53"
          fill="#4a5056"
          fontFamily="'Open Sans', sans-serif"
          fontWeight="600"
          fontSize="9"
          textAnchor="middle"
        >
          TOP
        </text>
      </svg>
      <button className="mt-[14px] w-[38px] h-[14px] rounded-[3px] border border-[#9ba0a4] bg-[#83898e] pl-[3px] text-left text-[8px] leading-[11px] text-[#4a5056]">
        WCS
      </button>
    </div>
  );
}

function NavBar() {
  return (
    <div className="absolute top-[178px] right-[2px] w-[27px] h-[170px] rounded-[3px] bg-[#545b61] border border-[#62696f] text-[#3d444b] flex flex-col items-center justify-between pt-[13px] pb-[14px]">
      <button aria-label="Full navigation wheel">
        <Ico w={20} h={20}>
          <path d="M2 2h8a8 8 0 1 1-8 8z" />
          <circle cx="10" cy="10" r="5" />
          <path d="M7.500 7.500h5v5h-5z" />
        </Ico>
      </button>
      <SmallCaret className="text-[#3d444b]" />
      <button aria-label="Pan">
        <Ico w={20} h={20}>
          <path d="M6 17l-4-6 1.500-1L6 12V5l1.500-.5L8.500 9l1-6.500h1.500V9l2-5.500 1.500.5L13 10l3-2 1 1-4 8z" />
        </Ico>
      </button>
      <button aria-label="Zoom extents">
        <Ico w={20} h={20}>
          <path d="M2 2l14 14M15 2L2 15M2 6V2h4M11 2h4v4M2 11v4h4" />
          <circle cx="14" cy="13" r="3.500" fill="#545b61" />
          <path d="M16.500 15.500l3 3" strokeWidth="2" />
        </Ico>
      </button>
      <SmallCaret className="text-[#3d444b]" />
      <button aria-label="Orbit">
        <Ico w={20} h={20}>
          <path d="M10 2v16M2 10h16M7 4l3-3 3 3M7 16l3 3 3-3M4 7l-3 3 3 3M16 7l3 3-3 3" />
          <ellipse cx="10" cy="10" rx="6" ry="3" />
        </Ico>
      </button>
      <SmallCaret className="text-[#3d444b]" />
      <button aria-label="ShowMotion">
        <Ico w={20} h={20}>
          <path d="M1.500 1.500h17v4h-17zM6 2v3M10 2v3M14 2v3M2.500 7.500h14v11h-14z" />
          <path d="M7 10l6 3-6 3z" fill="currentColor" stroke="none" />
        </Ico>
      </button>
    </div>
  );
}

const history = [
  { text: "Specify next point or [Arc/Close/Halfwidth/Length/Undo/Width]: *Cancel*", tone: "bg-[#454b50] text-[#aeb2b5]" },
  { text: "Command: Regenerating model.", tone: "bg-[#4d5357] text-[#c6c9cb]" },
  { text: "*Cancel*", tone: "bg-[#5b6064] text-[#e3e5e6]" },
];

function CommandLine() {
  const [command, setCommand] = useState("AP");

  return (
    <div className="absolute bottom-0 left-[245px] right-[245px] flex items-end">
      <div className="w-[45px] h-5 shrink-0 flex items-center bg-[#262c34] text-[#c3c8ce]">
        <Ico w={8} h={14} className="ml-[1px]">
          <path d="M1.500 0v14M3.500 0v14M5.500 0v14" strokeDasharray="1 1" />
        </Ico>
        <button aria-label="Close command line" className="ml-[2px]">
          <Ico w={8} h={8}><path d="M1 1l6 6M7 1L1 7" strokeWidth="1.400" /></Ico>
        </button>
        <button aria-label="Customize" className="ml-[9px]">
          <Ico w={12} h={12}>
            <path d="M1 11l6-6" strokeWidth="2" />
            <path d="M6 6V3l3-2-.5 2.500L11 3.500 9 7z" fill="currentColor" stroke="none" />
          </Ico>
        </button>
      </div>
      <div className="flex-1 min-w-0">
        <div className="pl-1 pb-[3px] flex flex-col items-start gap-1 font-['DejaVu_Sans_Mono',monospace] text-[9px] leading-3">
          {history.map((h) => (
            <p key={h.text} className={`h-3 px-[2px] rounded-[2px] whitespace-nowrap ${h.tone}`}>
              {h.text}
            </p>
          ))}
        </div>
        <div className="h-5 flex items-center bg-[#bcc0c0] border border-[#cfd2d2] text-[#2b3036]">
          <Ico w={14} h={11} className="ml-[2px]">
            <path d="M.5.500h12v10H.5zM.5 2.500h12M3 4.500l2 1.500-2 1.500M6 8.500h3" />
          </Ico>
          <Caret className="text-[#4a5057]" />
          <input
            aria-label="Command"
            value={command}
            onChange={(e) => setCommand(e.target.value)}
            className="flex-1 min-w-0 pl-[1px] bg-transparent outline-none text-[9px] leading-4 font-medium"
          />
          <button aria-label="Command history" className="mr-[3px]">
            <Ico w={5} h={3}><path d="M0 3h5L2.500 0z" fill="currentColor" stroke="none" /></Ico>
          </button>
        </div>
      </div>
    </div>
  );
}

function Canvas() {
  return (
    <main className="relative flex-1 bg-[#212830] overflow-hidden">
      <div className="h-6 flex items-center justify-between pl-[3px] text-[9px] text-[#d5d9de]">
        <div className="flex">
          <button>[−]</button>
          <button>[Top]</button>
          <button>[2D Wireframe]</button>
        </div>
        <div className="flex items-center gap-2 pr-[9px] text-white">
          <button aria-label="Minimize view">
            <Ico w={8} h={8}><path d="M0 5.500h8" strokeWidth="2" /></Ico>
          </button>
          <button aria-label="Restore view">
            <Ico w={8} h={8}><path d="M.7 2.700h5v4.600h-5zM2.500 2V.7h5V6H6" strokeWidth="1.400" /></Ico>
          </button>
          <button aria-label="Close view">
            <Ico w={7} h={8}><path d="M.7 1l5.600 6M6.300 1L.7 7" strokeWidth="1.700" /></Ico>
          </button>
        </div>
      </div>
      <Drawing />
      <ViewCube />
      <NavBar />
      <CommandLine />
    </main>
  );
}

/* ---------- status bar ---------- */

const person = "M7.500 1l1 5 5 6.500-5-2h-2l-5 2 5-6.500z";

const statusIcons = {
  grid: <path d="M4.500 1v13M7.500 1v13M10.500 1v13M1 4.500h13M1 7.500h13M1 10.500h13" />,
  snap: (
    <path d="M2 3h11M2 7h11M2 11h11" strokeWidth="2" strokeDasharray="2 2" />
  ),
  infer: (
    <>
      <path d="M2 8h6v5H2z" fill="currentColor" stroke="none" />
      <path d="M8.500 9V1.500h4v4h-4" />
    </>
  ),
  dyn: (
    <>
      <path d="M4.500 2v6M1.500 5h6" strokeWidth="1.300" />
      <path d="M6 8h8v4H6z" fill="currentColor" stroke="none" />
    </>
  ),
  ortho: <path d="M2.500 1v11.500H14M2.500 8.500h4v4" />,
  polar: (
    <>
      <circle cx="7" cy="8" r="4.800" />
      <path d="M7 8l6-6M7 8h7" />
    </>
  ),
  iso: (
    <>
      <path d="M7.500 1v13" />
      <path d="M2 2l5 5M8 8l5 5" stroke="#c07a80" />
      <path d="M4 12l3-4" />
    </>
  ),
  otrack: (
    <>
      <path d="M1 12.500h13M2 12L12 3" />
      <path d="M5 8h3v3H5z" fill="currentColor" stroke="none" />
    </>
  ),
  osnap: (
    <>
      <path d="M3.500 3.500h9.500v9.500H3.500z" strokeWidth="1.300" />
      <path d="M1.500 1.500h4v4h-4z" fill="#5f8fbf" />
    </>
  ),
  lineweight: (
    <>
      <path d="M2 3h5M8 4h6M2 7.500h12" />
      <path d="M2 6h6M2 11h11" strokeWidth="2" />
    </>
  ),
  transparency: (
    <>
      <path d="M1.500 1.500h12v12h-12z" />
      <path d="M3 4h9M3 8h9M3 12h9" strokeWidth="2" strokeDasharray="2 2" />
      <path d="M5 6h8M5 10h8" strokeWidth="2" strokeDasharray="2 2" />
    </>
  ),
  cycle: (
    <>
      <path d="M6 6h8v8H6z" fill="#7fdc93" stroke="none" />
      <path d="M3.500 1v5M1 3.500h5M4.500 7v6M6 4.500h6" />
    </>
  ),
  cube: (
    <>
      <path d="M5.500 5.500h6v5h-4M5.500 5.500l3-3h5v6l-2.500 2M11.500 5.500l2-3M5.500 5.500v3" />
      <path d="M1.500 9.500h4v4h-4z" />
    </>
  ),
  ucs: (
    <>
      <path d="M3.500 2v10H13M1.500 4l2-2.500 2 2.500M11 10l2.500 2-2.500 2" />
      <path d="M8 3l-1 4h2l-1 3 4-5h-2l1-2z" fill="currentColor" stroke="none" />
    </>
  ),
  filter: (
    <>
      <path d="M2.500 5.500h8v8h-8zM2.500 5.500l3-3h8v8l-3 3M10.500 5.500l3-3" strokeDasharray="3 1" />
      <path d="M1 4h3v3H1zM9 4h3v3H9zM1 12h3v2H1zM9 12h3v2H9z" fill="#5fb0e0" stroke="none" />
    </>
  ),
  gizmo: (
    <>
      <path d="M7.500 1.500l5.500 3v6l-5.500 3-5.500-3v-6z" />
      <path d="M7.500 3v5l-4 3M7.500 8l4 3" />
      <circle cx="7.500" cy="8" r="1.500" fill="currentColor" />
    </>
  ),
  annoVis: (
    <>
      <path d={person} fill="currentColor" stroke="none" />
      <circle cx="12" cy="4" r="1.800" />
    </>
  ),
  annoAuto: (
    <>
      <path d={person} fill="currentColor" stroke="none" />
      <path d="M12 0l-2 4h2l-1 3 4-5h-2l1-2z" fill="currentColor" stroke="none" />
    </>
  ),
  anno: <path d={person} fill="currentColor" stroke="none" />,
  plus: <path d="M7.500 1v13M1 7.500h13" strokeWidth="1.400" />,
  ruler: (
    <>
      <path d="M4 1h7v2H9v2h1v2H9v2h1v2H9v1h2v2H4z" fill="currentColor" stroke="none" />
      <path d="M7 3.500h2M7 7.500h2M7 11.500h2" stroke="#343c4a" />
    </>
  ),
  quickProps: (
    <>
      <path d="M2.500 1.500h10v12h-10z" />
      <path d="M3 3h9M4 6.500h2M7 6.500h4M4 8.500h2M7 8.500h4M4 11h2M7 11h4" strokeWidth="1.300" />
    </>
  ),
  lockUi: (
    <>
      <path d="M1.500 2.500h11v5M1.500 2.500v9h5M1 3.500h11" />
      <path d="M8 9h6v5H8z" fill="currentColor" stroke="none" />
      <path d="M11.500 9V7.500h3" />
    </>
  ),
  isolate: (
    <>
      <path d="M1.500 1.500h4v4h-4zM6 9l3 4.500H3z" />
      <circle cx="11.500" cy="6.500" r="2.500" />
    </>
  ),
  graphics: (
    <g className="text-[#767e89]">
      <circle cx="7.500" cy="7.500" r="6" stroke="currentColor" fill="#454e5c" />
      <path d="M4 4l5 5" stroke="currentColor" strokeWidth="1.500" />
    </g>
  ),
  clean: (
    <>
      <path d="M1.500 2.500h12v10h-12z" />
      <path d="M4 10l2.500-2.500M3.500 8v3h3M11 5L8.500 7.500M8.500 4.500h3v3" />
    </>
  ),
  custom: <path d="M1 2.500h13M1 7.500h13M1 12.500h13" strokeWidth="1.500" />,
};

const statusItems = [
  { icon: "grid", name: "Grid", width: "w-[20px]" },
  { icon: "snap", name: "Snap", width: "w-[19px]" },
  { caret: true, name: "Snap settings", width: "w-[14px]", end: true },
  { icon: "infer", name: "Infer Constraints", width: "w-[21px]" },
  { icon: "dyn", name: "Dynamic Input", width: "w-[20px]", on: true },
  { icon: "ortho", name: "Ortho", width: "w-[19px]" },
  { icon: "polar", name: "Polar", width: "w-[19px]" },
  { caret: true, name: "Polar settings", width: "w-[14px]" },
  { icon: "iso", name: "Isometric", width: "w-[18px]" },
  { caret: true, name: "Isometric settings", width: "w-[14px]", end: true },
  { icon: "otrack", name: "Object Snap Tracking", width: "w-[19px]" },
  { icon: "osnap", name: "Object Snap", width: "w-[20px]", on: true },
  { caret: true, name: "Object Snap settings", width: "w-[14px]", end: true },
  { icon: "lineweight", name: "Lineweight", width: "w-[19px]" },
  { icon: "transparency", name: "Transparency", width: "w-[20px]", on: true },
  { icon: "cycle", name: "Selection Cycling", width: "w-[20px]" },
  { icon: "cube", name: "3D Object Snap", width: "w-[19px]" },
  { caret: true, name: "3D Object Snap settings", width: "w-[14px]", end: true },
  { icon: "ucs", name: "Dynamic UCS", width: "w-[21px]" },
  { icon: "filter", name: "Selection Filter", width: "w-[19px]" },
  { caret: true, name: "Selection Filter settings", width: "w-[13px]" },
  { icon: "gizmo", name: "Gizmo", width: "w-[19px]", on: true },
  { caret: true, name: "Gizmo settings", width: "w-[14px]", end: true },
  { icon: "annoVis", name: "Annotation Visibility", width: "w-[21px]", on: true },
  { icon: "annoAuto", name: "AutoScale", width: "w-[19px]", on: true },
  { icon: "anno", name: "Annotation Scale", width: "w-[19px]" },
  { text: "1:1 / 100%", width: "w-[46px]" },
  { caret: true, name: "Scale list", width: "w-[14px]", end: true },
  { gear: true, name: "Workspace Switching", width: "w-[21px]" },
  { caret: true, name: "Workspace list", width: "w-[13px]", end: true },
  { icon: "plus", name: "Annotation Monitor", width: "w-[21px]", end: true },
  { icon: "ruler", name: "Units", width: "w-[21px]" },
  { text: "Decimal", width: "w-[42px]" },
  { caret: true, name: "Units list", width: "w-[16px]", end: true },
  { icon: "quickProps", name: "Quick Properties", width: "w-[21px]", end: true },
  { icon: "lockUi", name: "Lock UI", width: "w-[21px]" },
  { caret: true, name: "Lock UI settings", width: "w-[13px]", end: true },
  { icon: "isolate", name: "Isolate Objects", width: "w-[20px]", end: true },
  { icon: "graphics", name: "Graphics Performance", width: "w-[22px]", end: true },
  { icon: "clean", name: "Clean Screen", width: "w-[20px]" },
  { icon: "custom", name: "Customization", width: "w-[20px]" },
];

function StatusItem({ item }) {
  return (
    <button
      aria-label={item.name}
      className={`${item.width} shrink-0 flex items-center justify-center whitespace-nowrap ${
        item.end ? "border-r border-[#232a33]" : ""
      }`}
    >
      {item.text}
      {item.caret && <Caret />}
      {item.gear && <Gear />}
      {item.icon && (
        <span className={`w-[18px] h-[18px] shrink-0 flex items-center justify-center ${item.on ? "bg-[#5f8fbf] text-white" : ""}`}>
          <Ico w={15} h={15}>{statusIcons[item.icon]}</Ico>
        </span>
      )}
    </button>
  );
}

function StatusBar() {
  const slant = "[clip-path:polygon(0_0,100%_0,calc(100%-6px)_100%,6px_100%)]";

  return (
    <footer className="h-[22px] flex bg-[#232a33] border-t border-[#2f3743] text-[9px] text-[#e8eaed]">
      <div className="flex pl-2 h-[14px] leading-[14px] text-[#b4bac1]">
        <button className={`w-[49px] bg-[#3b4453] text-white font-bold ${slant}`}>Model</button>
        <button className={`w-[50px] bg-[#2b323d] ${slant}`}>Layout1</button>
        <button className={`w-[54px] bg-[#2b323d] ${slant}`}>Layout2</button>
        <button aria-label="New layout" className={`w-[22px] flex items-center justify-center bg-[#2b323d] ${slant}`}>
          <Ico w={7} h={7}><path d="M3.500 0v7M0 3.500h7" strokeWidth="1.300" /></Ico>
        </button>
      </div>
      <div className="ml-auto mr-[1px] flex bg-[#343c4a]">
        <output className="w-[120px] pr-1 flex items-center justify-end border-r border-[#232a33] whitespace-nowrap">
          -10.287, -16.843, 0.000
        </output>
        <button className="w-[42px] border-r border-[#232a33]">MODEL</button>
        {statusItems.map((item, i) => (
          <StatusItem key={i} item={item} />
        ))}
      </div>
    </footer>
  );
}

export default function App() {
  return (
    <div className="min-h-screen flex flex-col py-5 bg-black font-['Open_Sans',sans-serif]">
      <Header />
      <Ribbon />
      <FileTabs />
      <Canvas />
      <StatusBar />
    </div>
  );
}
